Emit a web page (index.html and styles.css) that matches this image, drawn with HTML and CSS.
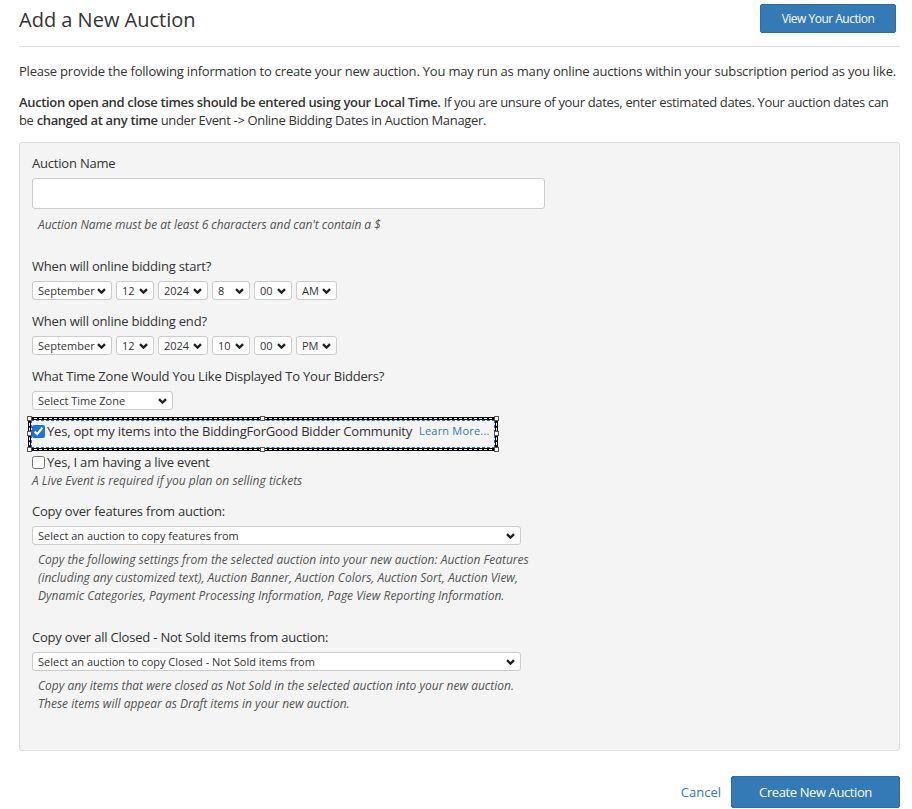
FILE: index.html
```html
<!DOCTYPE html>
<html lang="en">
<head>
<meta charset="utf-8">
<title>Add a New Auction</title>
<link rel="stylesheet" href="styles.css">
</head>
<body>
<div class="page">
  <header class="head">
    <h1 class="title">Add a New Auction</h1>
    <button class="btn btn-view">View Your Auction</button>
  </header>
  <p class="intro">Please provide the following information to create your new auction. You may run as many online auctions within your subscription period as you like.</p>
  <p class="intro intro2"><b>Auction open and close times should be entered using your Local Time.</b> If you are unsure of your dates, enter estimated dates. Your auction dates can be <b>changed at any time</b> under Event -&gt; Online Bidding Dates in Auction Manager.</p>

  <div class="panel">
    <label class="lbl">Auction Name</label>
    <input class="txt" type="text">
    <div class="help help-name">Auction Name must be at least 6 characters and can't contain a $</div>

    <div class="lbl lbl-gap">When will online bidding start?</div>
    <div class="selrow">
      <select class="sel w-month"><option>September</option></select>
      <select class="sel w-num"><option>12</option></select>
      <select class="sel w-year"><option>2024</option></select>
      <select class="sel w-num"><option>8</option></select>
      <select class="sel w-num"><option>00</option></select>
      <select class="sel w-ampm"><option>AM</option></select>
    </div>

    <div class="lbl lbl-sm">When will online bidding end?</div>
    <div class="selrow">
      <select class="sel w-month"><option>September</option></select>
      <select class="sel w-num"><option>12</option></select>
      <select class="sel w-year"><option>2024</option></select>
      <select class="sel w-num"><option>10</option></select>
      <select class="sel w-num"><option>00</option></select>
      <select class="sel w-ampm"><option>PM</option></select>
    </div>

    <div class="lbl lbl-sm">What Time Zone Would You Like Displayed To Your Bidders?</div>
    <div class="selrow">
      <select class="sel w-tz"><option>Select Time Zone</option></select>
    </div>

    <div class="checkrow check-opt">
      <input type="checkbox" class="cb" checked>
      <span class="cbtext">Yes, opt my items into the BiddingForGood Bidder Community</span>
      <a class="learn" href="#">Learn More...</a>
      <div class="selection">
        <span class="handle h-tl"></span><span class="handle h-tm"></span><span class="handle h-tr"></span>
        <span class="handle h-ml"></span><span class="handle h-mr"></span>
        <span class="handle h-bl"></span><span class="handle h-bm"></span><span class="handle h-br"></span>
      </div>
    </div>
    <div class="checkrow check-live">
      <input type="checkbox" class="cb">
      <span class="cbtext">Yes, I am having a live event</span>
    </div>
    <div class="help help-live">A Live Event is required if you plan on selling tickets</div>

    <div class="lbl lbl-sm">Copy over features from auction:</div>
    <div class="selrow">
      <select class="sel w-wide"><option>Select an auction to copy features from</option></select>
    </div>
    <div class="help help-block">Copy the following settings from the selected auction into your new auction: Auction Features<br>(including any customized text), Auction Banner, Auction Colors, Auction Sort, Auction View,<br>Dynamic Categories, Payment Processing Information, Page View Reporting Information.</div>

    <div class="lbl lbl-gap">Copy over all Closed - Not Sold items from auction:</div>
    <div class="selrow">
      <select class="sel w-wide"><option>Select an auction to copy Closed - Not Sold items from</option></select>
    </div>
    <div class="help help-block">Copy any items that were closed as Not Sold in the selected auction into your new auction.<br>These items will appear as Draft items in your new auction.</div>
  </div>

  <footer class="actions">
    <a class="cancel" href="#">Cancel</a>
    <button class="btn btn-create">Create New Auction</button>
  </footer>
</div>
</body>
</html>
```

FILE: styles.css
```css
* { box-sizing: border-box; }
html, body { margin: 0; padding: 0; background: #fff; }
body {
  font-family: "Open Sans", "Liberation Sans", sans-serif;
  color: #333;
  font-size: 13px;
  line-height: 18px;
  letter-spacing: -0.2px;
  overflow: hidden;
}
.page { width: 912px; padding: 0 12px 0 19px; }

.head {
  display: flex;
  justify-content: space-between;
  align-items: flex-start;
  border-bottom: 1px solid #ddd;
  height: 47px;
  padding-top: 4px;
}
.title {
  margin: 0;
  font-size: 20px;
  font-weight: 400;
  line-height: 32px;
  letter-spacing: 0;
  color: #333;
}
.btn {
  font-family: "Open Sans", "Liberation Sans", sans-serif;
  background: #337ab7;
  color: #fff;
  border: 1px solid #2e6da4;
  border-radius: 2px;
  cursor: pointer;
}
.btn-view {
  width: 136px;
  height: 29px;
  font-size: 12px;
  letter-spacing: -0.5px;
  margin-right: 4px;
  padding: 0;
}

.intro { margin: 15px 0 0; }
.intro2 { margin-top: 13px; letter-spacing: -0.34px; }
.intro b { font-weight: 600; }

.panel {
  margin-top: 13px;
  background: #f4f4f4;
  border: 1px solid #ddd;
  border-radius: 3px;
  padding: 11px 12px 36px 12px;
  height: 609px;
}
.lbl { display: block; font-size: 13px; line-height: 18px; }
.lbl-gap { margin-top: 23px; }
.lbl-sm { margin-top: 12px; }

.txt {
  display: block;
  width: 513px;
  height: 31px;
  margin-top: 6px;
  border: 1px solid #ccc;
  border-radius: 3px;
  background: #fff;
}

.help {
  font-size: 12px;
  font-style: italic;
  color: #555;
  line-height: 18px;
  letter-spacing: 0;
}
.help-name { margin-top: 7px; padding-left: 6px; letter-spacing: -0.05px; }
.help-live { margin-top: 1px; }
.help-block { margin-top: 6px; padding-left: 6px; white-space: nowrap; }

.selrow { display: flex; gap: 4px; margin-top: 6px; }
.sel {
  -webkit-appearance: none;
  appearance: none;
  height: 19px;
  font-family: "Open Sans", "Liberation Sans", sans-serif;
  font-size: 11px;
  letter-spacing: 0;
  color: #333;
  padding: 0 16px 0 5px;
  border: 1px solid #ccc;
  border-radius: 3px;
  background-color: #fff;
  background-image: url("data:image/svg+xml,%3Csvg xmlns='http://www.w3.org/2000/svg' width='9' height='6' viewBox='0 0 9 6'%3E%3Cpath d='M1 1.1 L4.5 4.6 L8 1.1' fill='none' stroke='%23222' stroke-width='2.3'/%3E%3C/svg%3E");
  background-repeat: no-repeat;
  background-position: right 5px center;
  background-size: 9px 6px;
}
.w-month { width: 80px; }
.w-num { width: 38px; }
.w-year { width: 50px; }
.w-ampm { width: 41px; }
.w-tz { width: 141px; }
.w-wide { width: 489px; }

.checkrow {
  position: relative;
  display: flex;
  align-items: center;
  height: 18px;
}
.check-opt { margin-top: 12px; }
.check-live { margin-top: 13px; }
.cb {
  margin: 0 2px 0 0;
  width: 13px;
  height: 13px;
  accent-color: #1a73e8;
}
.cbtext { font-size: 13px; }
.learn {
  font-size: 11px;
  letter-spacing: 0.2px;
  color: #337ab7;
  text-decoration: none;
  margin-left: 7px;
}

.selection {
  position: absolute;
  left: -4px;
  top: -5px;
  width: 470px;
  height: 34px;
  border: 3px solid #000;
  pointer-events: none;
}
.selection::before {
  content: "";
  position: absolute;
  inset: -2px;
  border: 1px dashed #fff;
}
.selection::after {
  content: "";
  position: absolute;
  inset: 0;
  border: 1px dashed #1a73e8;
}
.handle {
  position: absolute;
  width: 5px;
  height: 5px;
  background: #fff;
  border: 1px solid #555;
  z-index: 1;
}
.h-tl { left: -4px; top: -4px; }
.h-tm { left: 229px; top: -4px; }
.h-tr { right: -4px; top: -4px; }
.h-ml { left: -4px; top: 11px; }
.h-mr { right: -4px; top: 11px; }
.h-bl { left: -4px; bottom: -4px; }
.h-bm { left: 229px; bottom: -4px; }
.h-br { right: -4px; bottom: -4px; }

.actions {
  display: flex;
  justify-content: flex-end;
  align-items: center;
  margin-top: 25px;
}
.cancel {
  color: #337ab7;
  text-decoration: none;
  font-size: 13px;
  letter-spacing: 0;
  margin-right: 10px;
}
.btn-create {
  width: 169px;
  height: 32px;
  font-size: 13px;
  letter-spacing: -0.4px;
  padding: 0;
}
```
